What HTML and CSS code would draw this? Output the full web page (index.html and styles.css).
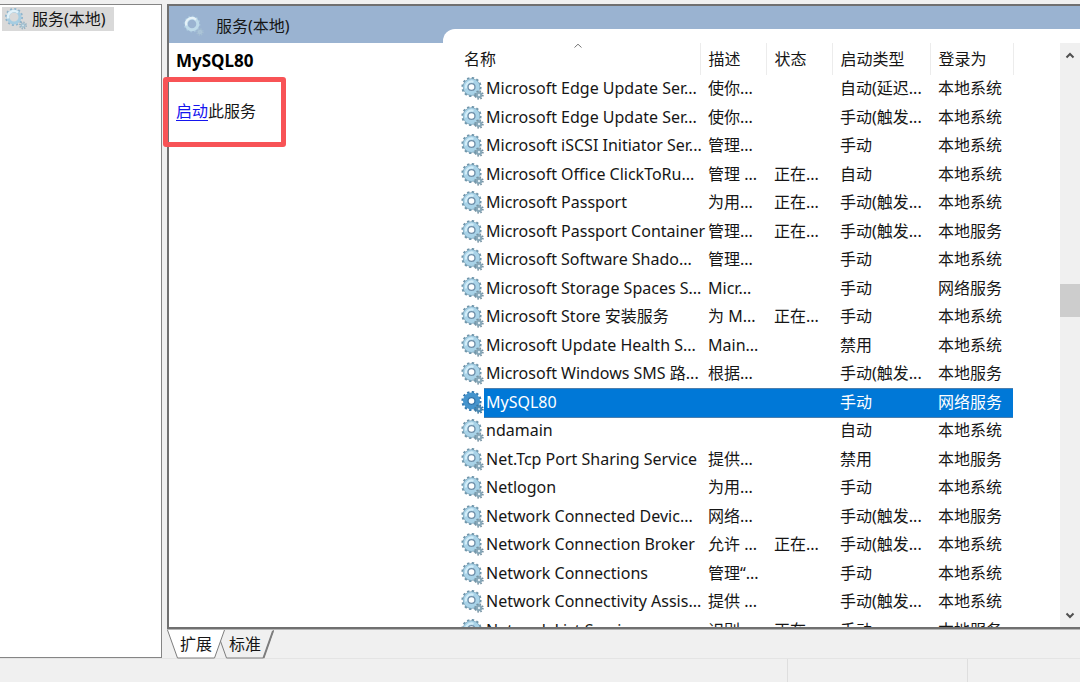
FILE: index.html
```html
<!DOCTYPE html>
<html lang="zh-CN">
<head>
<meta charset="utf-8">
<title>服务</title>
<link rel="stylesheet" href="styles.css">
</head>
<body>
<svg class="sprite" aria-hidden="true">
  <symbol id="gears" viewBox="0 0 24 24">
    <circle cx="10.500" cy="10" r="8.8" fill="none" stroke="#6f95aa" stroke-width="2.6" stroke-dasharray="2.3 2.307"/>
    <circle cx="10.500" cy="10" r="6.2" fill="none" stroke="#7ba3b9" stroke-width="5"/>
    <circle cx="10.500" cy="10" r="6" fill="none" stroke="#a9d3e8" stroke-width="4.2"/>
    <path d="M5.1 11.5A5.8 5.8 0 0 1 12.5 4.7" fill="none" stroke="#d3edf8" stroke-width="2.2"/>
    <circle cx="10.500" cy="10" r="3.4" fill="#fff" stroke="#6d8faa" stroke-width="1.2"/>
    <circle cx="18" cy="18" r="3.7" fill="none" stroke="#7894a4" stroke-width="2" stroke-dasharray="1.5 1.406"/>
    <circle cx="18" cy="18" r="2.2" fill="#dcecf4" stroke="#86a7b8" stroke-width="2"/>
  </symbol>
  <symbol id="gears-selected" viewBox="0 0 24 24">
    <circle cx="10.500" cy="10" r="8.8" fill="none" stroke="#3478ad" stroke-width="2.6" stroke-dasharray="2.3 2.307"/>
    <circle cx="10.500" cy="10" r="6" fill="none" stroke="#4594cd" stroke-width="5"/>
    <circle cx="10.500" cy="10" r="3.4" fill="#fff" stroke="#2c70a8" stroke-width="1.2"/>
    <circle cx="18" cy="18" r="3.7" fill="none" stroke="#3c779f" stroke-width="2" stroke-dasharray="1.5 1.406"/>
    <circle cx="18" cy="18" r="2.2" fill="#a9cde5" stroke="#4787b3" stroke-width="2"/>
  </symbol>
  <symbol id="gears-soft" viewBox="0 0 24 24">
    <circle cx="10" cy="10" r="8" fill="none" stroke="#8fb4cc" stroke-width="2" stroke-dasharray="2 2.189"/>
    <circle cx="10" cy="10" r="6" fill="none" stroke="#a6cde2" stroke-width="3"/>
    <path d="M4.3 11.5A5.9 5.9 0 0 1 14 5.6" fill="none" stroke="#e1f1f9" stroke-width="2.4"/>
    <circle cx="19" cy="18.4" r="3" fill="none" stroke="#93b0c2" stroke-width="2" stroke-dasharray="1.2 1.156"/>
    <circle cx="19" cy="18.4" r="1.6" fill="#d5e5ee" stroke="#a2c0d0" stroke-width="1.4"/>
  </symbol>
  <symbol id="gears-band" viewBox="0 0 24 24">
    <circle cx="10" cy="10" r="7.6" fill="none" stroke="#a9c6dc" stroke-width="1.6" stroke-dasharray="2 1.979"/>
    <circle cx="10" cy="10" r="5.8" fill="none" stroke="#bfdbea" stroke-width="3"/>
    <path d="M4.3 11.5A5.9 5.9 0 0 1 14 5.6" fill="none" stroke="#e6f2f8" stroke-width="2.2"/>
    <circle cx="18" cy="18" r="2.8" fill="none" stroke="#a5bed2" stroke-width="2" stroke-dasharray="1.2 0.999"/>
    <circle cx="18" cy="18" r="1.6" fill="#a9c0d8" stroke="#abc5d7" stroke-width="1.4"/>
  </symbol>
</svg>
<div class="window">
  <main class="workspace">
    <nav class="tree" aria-label="控制台树">
      <button class="tree-item" type="button"><svg class="icon"><use href="#gears-soft"/></svg>服务(本地)</button>
    </nav>
    <section class="content">
      <div class="panel">
        <div class="details">
          <h1 class="band"><svg class="icon"><use href="#gears-band"/></svg>服务(本地)</h1>
          <div class="info">
            <h2 class="service-name">MySQL80</h2>
            <p class="action"><a href="#start">启动</a>此服务</p>
          </div>
        </div>
        <div class="list">
          <div class="list-view">
            <table class="services">
              <colgroup><col class="c-icon"><col class="c-name"><col class="c-short"><col class="c-status"><col class="c-start"><col class="c-logon"></colgroup>
              <thead>
                <tr><th colspan="2" class="h-name">名称<svg class="sort" viewBox="0 0 10 6"><path d="M1.5 4.5L5 1.2L8.500 4.500"/></svg></th><th>描述</th><th>状态</th><th>启动类型</th><th>登录为</th></tr>
              </thead>
              <tbody>
                <tr><td><svg class="icon"><use href="#gears"/></svg></td><td class="name">Microsoft Edge Update Ser...</td><td>使你...</td><td></td><td>自动(延迟...</td><td>本地系统</td></tr>
                <tr><td><svg class="icon"><use href="#gears"/></svg></td><td class="name">Microsoft Edge Update Ser...</td><td>使你...</td><td></td><td>手动(触发...</td><td>本地系统</td></tr>
                <tr><td><svg class="icon"><use href="#gears"/></svg></td><td class="name">Microsoft iSCSI Initiator Ser...</td><td>管理...</td><td></td><td>手动</td><td>本地系统</td></tr>
                <tr><td><svg class="icon"><use href="#gears"/></svg></td><td class="name">Microsoft Office ClickToRu...</td><td>管理 ...</td><td>正在...</td><td>自动</td><td>本地系统</td></tr>
                <tr><td><svg class="icon"><use href="#gears"/></svg></td><td class="name">Microsoft Passport</td><td>为用...</td><td>正在...</td><td>手动(触发...</td><td>本地系统</td></tr>
                <tr><td><svg class="icon"><use href="#gears"/></svg></td><td class="name">Microsoft Passport Container</td><td>管理...</td><td>正在...</td><td>手动(触发...</td><td>本地服务</td></tr>
                <tr><td><svg class="icon"><use href="#gears"/></svg></td><td class="name">Microsoft Software Shado...</td><td>管理...</td><td></td><td>手动</td><td>本地系统</td></tr>
                <tr><td><svg class="icon"><use href="#gears"/></svg></td><td class="name">Microsoft Storage Spaces S...</td><td>Micr...</td><td></td><td>手动</td><td>网络服务</td></tr>
                <tr><td><svg class="icon"><use href="#gears"/></svg></td><td class="name">Microsoft Store 安装服务</td><td>为 M...</td><td>正在...</td><td>手动</td><td>本地系统</td></tr>
                <tr><td><svg class="icon"><use href="#gears"/></svg></td><td class="name">Microsoft Update Health S...</td><td>Main...</td><td></td><td>禁用</td><td>本地系统</td></tr>
                <tr><td><svg class="icon"><use href="#gears"/></svg></td><td class="name">Microsoft Windows SMS 路...</td><td>根据...</td><td></td><td>手动(触发...</td><td>本地服务</td></tr>
                <tr class="selected"><td><svg class="icon"><use href="#gears-selected"/></svg></td><td class="name">MySQL80</td><td></td><td></td><td>手动</td><td>网络服务</td></tr>
                <tr><td><svg class="icon"><use href="#gears"/></svg></td><td class="name">ndamain</td><td></td><td></td><td>自动</td><td>本地系统</td></tr>
                <tr><td><svg class="icon"><use href="#gears"/></svg></td><td class="name">Net.Tcp Port Sharing Service</td><td>提供...</td><td></td><td>禁用</td><td>本地服务</td></tr>
                <tr><td><svg class="icon"><use href="#gears"/></svg></td><td class="name">Netlogon</td><td>为用...</td><td></td><td>手动</td><td>本地系统</td></tr>
                <tr><td><svg class="icon"><use href="#gears"/></svg></td><td class="name">Network Connected Devic...</td><td>网络...</td><td></td><td>手动(触发...</td><td>本地服务</td></tr>
                <tr><td><svg class="icon"><use href="#gears"/></svg></td><td class="name">Network Connection Broker</td><td>允许 ...</td><td>正在...</td><td>手动(触发...</td><td>本地系统</td></tr>
                <tr><td><svg class="icon"><use href="#gears"/></svg></td><td class="name">Network Connections</td><td>管理“...</td><td></td><td>手动</td><td>本地系统</td></tr>
                <tr><td><svg class="icon"><use href="#gears"/></svg></td><td class="name">Network Connectivity Assis...</td><td>提供 ...</td><td></td><td>手动(触发...</td><td>本地系统</td></tr>
                <tr><td><svg class="icon"><use href="#gears"/></svg></td><td class="name">Network List Service</td><td>识别...</td><td>正在...</td><td>手动</td><td>本地服务</td></tr>
              </tbody>
            </table>
          </div>
          <div class="scrollbar">
            <button class="arrow" type="button" aria-label="向上滚动"><svg viewBox="0 0 10 7"><path d="M1.500 5.500L5 2L8.500 5.500"/></svg></button>
            <div class="track"><div class="thumb"></div></div>
            <button class="arrow" type="button" aria-label="向下滚动"><svg viewBox="0 0 10 7"><path d="M1.500 1.500L5 5L8.500 1.500"/></svg></button>
          </div>
        </div>
      </div>
      <div class="tabs">
        <button class="tab active" type="button"><svg class="tab-shape" viewBox="0 0 58 29"><path d="M0.500 0L10.500 28H47.500L57.500 0"/></svg><span>扩展</span></button>
        <button class="tab" type="button"><svg class="tab-shape" viewBox="0 0 58 29"><path d="M0.500 0L10.500 28H47.500L57.500 0"/><path class="edge" d="M47.500 28L57 1"/></svg><span>标准</span></button>
      </div>
    </section>
  </main>
  <footer class="status"><div class="status-main"></div><div class="status-mid"></div><div class="status-end"></div></footer>
</div>
</body>
</html>
```
FILE: styles.css
```css
* { box-sizing: border-box; }
body {
  margin: 0;
  background: #f0f0f0;
  color: #161616;
  font: 16px/24px "Noto Sans", "Noto Sans CJK SC", sans-serif;
}
h1, h2, p { margin: 0; }
button { font: inherit; color: inherit; border: 0; padding: 0; background: none; }
.sprite { position: absolute; width: 0; height: 0; }
.icon { display: block; flex: none; width: 24px; height: 24px; }
.window { display: flex; flex-direction: column; height: 100vh; overflow: hidden; }
.workspace { display: flex; flex: 1; min-height: 0; gap: 5px; padding-top: 4px; }

.tree {
  flex: none;
  width: 162px;
  padding: 2px;
  background: #fff;
  border: 1px solid #858585;
  border-left: 0;
}
.tree-item {
  display: flex;
  align-items: center;
  gap: 4px;
  height: 24px;
  padding: 0 8px 0 2px;
  background: #d9d9d9;
}

.content { display: flex; flex: 1; flex-direction: column; min-width: 0; }
.panel {
  display: flex;
  flex: 1;
  min-height: 0;
  background: #9ab3d1;
  border: 2px solid #707070;
  border-right: 0;
}
.details { display: flex; flex: none; flex-direction: column; width: 274px; }
.band {
  display: flex;
  align-items: center;
  gap: 10px;
  height: 37px;
  padding: 2px 0 0 13px;
  font-size: 16px;
  font-weight: 400;
}
.info { flex: 1; padding: 6px 7px; background: #fff; }
.service-name { font-size: 17px; font-weight: 700; color: #000; }
.action {
  display: flex;
  align-items: center;
  width: 123px;
  height: 70px;
  margin: 4px 0 0 -13px;
  padding: 0 0 2px 8px;
  border: 5px solid #f85356;
  border-radius: 3px;
  position: relative;
}
.action a { color: #1515ee; text-underline-offset: 3px; }

.list {
  display: flex;
  flex: 1;
  min-width: 0;
  margin-top: 23px;
  padding-top: 14px;
  background: #fff;
  border-top-left-radius: 12px;
}
.list-view { flex: 1; min-width: 0; padding-left: 17px; overflow: hidden; }
.services { width: 553px; table-layout: fixed; border-collapse: collapse; white-space: nowrap; }
.c-icon { width: 24px; }
.c-name { width: 216px; }
.c-short { width: 66px; }
.c-status { width: 66px; }
.c-start { width: 98px; }
.c-logon { width: 83px; }
th { height: 32px; padding: 0 0 0 8px; text-align: left; font-weight: 400; border-right: 1px solid #ececec; }
.h-name { position: relative; padding-left: 4px; }
.sort { position: absolute; top: 0; left: 113px; width: 10px; height: 6px; }
.sort path { fill: none; stroke: #777; }
td { height: 28px; padding: 0 0 2px 8px; }
tr:nth-child(even) td { height: 29px; }
td:first-child { padding: 0 0 0 1px; }
td.name { padding-left: 2px; }
.selected td:not(:first-child) { background: #0078d7; color: #fff; border: 1px solid #4c7fae; border-width: 1px 0; }

.scrollbar { display: flex; flex: none; flex-direction: column; width: 20px; background: #f0f0f0; }
.arrow { display: flex; align-items: center; justify-content: center; height: 24px; }
.arrow svg { width: 10px; height: 7px; }
.arrow path { fill: none; stroke: #505050; stroke-width: 2; }
.track { flex: 1; padding-top: 217px; }
.thumb { height: 33px; background: #cdcdcd; }

.tabs { display: flex; flex: none; height: 29px; border-top: 1px solid #b5b5b5; }
.tab { position: relative; width: 58px; height: 28px; }
.tab + .tab { margin-left: -9px; }
.tab.active { z-index: 1; }
.tab-shape { position: absolute; top: 0; left: 0; width: 58px; height: 29px; }
.tab-shape path { fill: #f0f0f0; stroke: #7d7d7d; }
.tab.active path { fill: #fff; }
.tab-shape .edge { stroke-width: 2; }
.tab span { position: relative; }

.status { display: flex; flex: none; height: 24px; border-top: 1px solid #e4e4e4; }
.status-main { flex: 1; border-right: 1px solid #dedede; }
.status-mid { width: 180px; border-right: 1px solid #dedede; }
.status-end { width: 112px; }
```
